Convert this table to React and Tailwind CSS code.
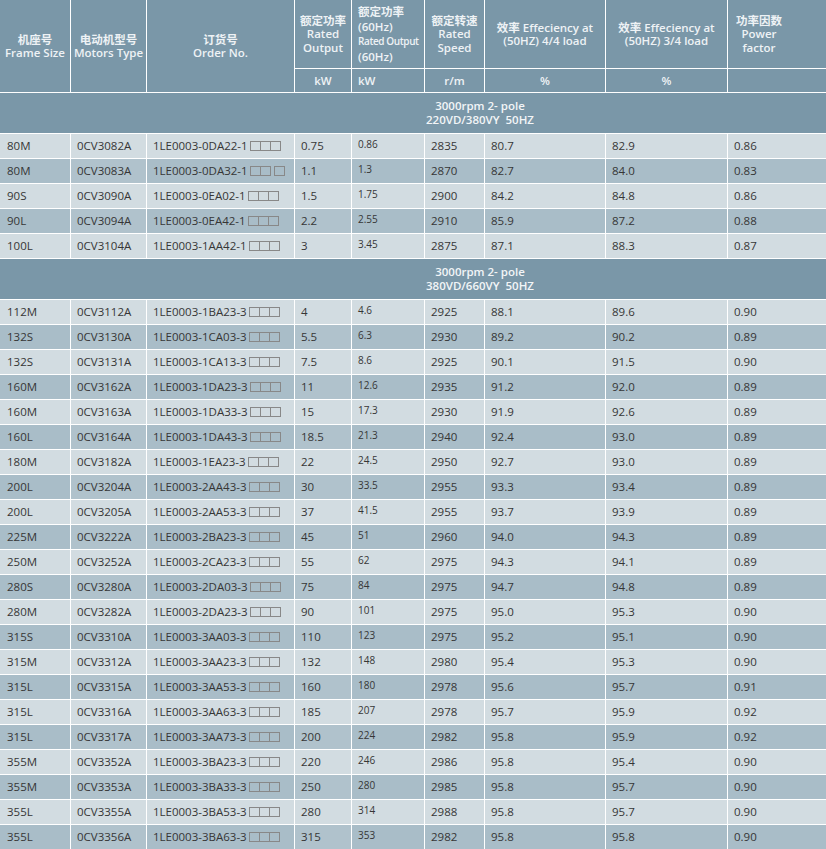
import React from "react";

const group1 = [
  ["80M", "0CV3082A", "1LE0003-0DA22-1", "0.75", "0.86", "2835", "80.7", "82.9", "0.86"],
  ["80M", "0CV3083A", "1LE0003-0DA32-1", "1.1", "1.3", "2870", "82.7", "84.0", "0.83", true],
  ["90S", "0CV3090A", "1LE0003-0EA02-1", "1.5", "1.75", "2900", "84.2", "84.8", "0.86"],
  ["90L", "0CV3094A", "1LE0003-0EA42-1", "2.2", "2.55", "2910", "85.9", "87.2", "0.88"],
  ["100L", "0CV3104A", "1LE0003-1AA42-1", "3", "3.45", "2875", "87.1", "88.3", "0.87"],
];

const group2 = [
  ["112M", "0CV3112A", "1LE0003-1BA23-3", "4", "4.6", "2925", "88.1", "89.6", "0.90"],
  ["132S", "0CV3130A", "1LE0003-1CA03-3", "5.5", "6.3", "2930", "89.2", "90.2", "0.89"],
  ["132S", "0CV3131A", "1LE0003-1CA13-3", "7.5", "8.6", "2925", "90.1", "91.5", "0.90"],
  ["160M", "0CV3162A", "1LE0003-1DA23-3", "11", "12.6", "2935", "91.2", "92.0", "0.89"],
  ["160M", "0CV3163A", "1LE0003-1DA33-3", "15", "17.3", "2930", "91.9", "92.6", "0.89"],
  ["160L", "0CV3164A", "1LE0003-1DA43-3", "18.5", "21.3", "2940", "92.4", "93.0", "0.89"],
  ["180M", "0CV3182A", "1LE0003-1EA23-3", "22", "24.5", "2950", "92.7", "93.0", "0.89"],
  ["200L", "0CV3204A", "1LE0003-2AA43-3", "30", "33.5", "2955", "93.3", "93.4", "0.89"],
  ["200L", "0CV3205A", "1LE0003-2AA53-3", "37", "41.5", "2955", "93.7", "93.9", "0.89"],
  ["225M", "0CV3222A", "1LE0003-2BA23-3", "45", "51", "2960", "94.0", "94.3", "0.89"],
  ["250M", "0CV3252A", "1LE0003-2CA23-3", "55", "62", "2975", "94.3", "94.1", "0.89"],
  ["280S", "0CV3280A", "1LE0003-2DA03-3", "75", "84", "2975", "94.7", "94.8", "0.89"],
  ["280M", "0CV3282A", "1LE0003-2DA23-3", "90", "101", "2975", "95.0", "95.3", "0.90"],
  ["315S", "0CV3310A", "1LE0003-3AA03-3", "110", "123", "2975", "95.2", "95.1", "0.90"],
  ["315M", "0CV3312A", "1LE0003-3AA23-3", "132", "148", "2980", "95.4", "95.3", "0.90"],
  ["315L", "0CV3315A", "1LE0003-3AA53-3", "160", "180", "2978", "95.6", "95.7", "0.91"],
  ["315L", "0CV3316A", "1LE0003-3AA63-3", "185", "207", "2978", "95.7", "95.9", "0.92"],
  ["315L", "0CV3317A", "1LE0003-3AA73-3", "200", "224", "2982", "95.8", "95.9", "0.92"],
  ["355M", "0CV3352A", "1LE0003-3BA23-3", "220", "246", "2986", "95.8", "95.4", "0.90"],
  ["355M", "0CV3353A", "1LE0003-3BA33-3", "250", "280", "2985", "95.8", "95.7", "0.90"],
  ["355L", "0CV3355A", "1LE0003-3BA53-3", "280", "314", "2988", "95.8", "95.7", "0.90"],
  ["355L", "0CV3356A", "1LE0003-3BA63-3", "315", "353", "2982", "95.8", "95.8", "0.90"],
];

const Boxes = ({ split }) => (
  <span className="inline-flex items-center ml-[2px]">
    <span className="w-[11px] h-[10px] border border-[#888]"></span>
    <span className="w-[11px] h-[10px] border border-[#888] -ml-px"></span>
    <span
      className={
        split
          ? "w-[11px] h-[10px] border border-[#888] ml-[3px]"
          : "w-[11px] h-[10px] border border-[#888] -ml-px"
      }
    ></span>
  </span>
);

const Row = ({ r, dark }) => {
  let bg = dark ? "bg-[#a9bdc8]" : "bg-[#d2dce1]";
  let bgAlt = dark ? "bg-[#b0c2cc]" : "bg-[#d2dce1]";
  let cell = "h-[24px] flex items-center pl-[6px] text-[11.5px] text-[#363636] whitespace-nowrap";
  return (
    <>
      <div className={`${cell} ${bg} pl-[7px]`}>{r[0]}</div>
      <div className={`${cell} ${bgAlt}`}>{r[1]}</div>
      <div className={`${cell} ${bg}`}>
        {r[2]}
        <Boxes split={r[9]} />
      </div>
      <div className={`${cell} ${bgAlt}`}>{r[3]}</div>
      <div className={`h-[24px] flex items-start pt-[3px] pl-[6px] text-[10px] text-[#363636] ${bg}`}>{r[4]}</div>
      <div className={`${cell} ${bg} pl-[5px]`}>{r[5]}</div>
      <div className={`${cell} ${bg} pl-[4px]`}>{r[6]}</div>
      <div className={`${cell} ${bg} pl-[5px]`}>{r[7]}</div>
      <div className={`${cell} ${bg} pl-[5px]`}>{r[8]}</div>
    </>
  );
};

const GroupHeader = ({ volts }) => (
  <div className="col-span-full h-[40px] bg-[#7a97a8] flex flex-col justify-center items-center pl-[134px] text-[11.5px] leading-[14px] font-semibold text-[#f2f5f7]">
    <span>3000rpm 2- pole</span>
    <span className="whitespace-pre">{volts}</span>
  </div>
);

const App = () => {
  let head = "bg-[#7a97a8] text-[#eef2f5] text-[11.5px] font-semibold";
  return (
    <div className="w-full min-h-screen bg-white font-['Open_Sans','Noto_Sans_CJK_SC',sans-serif]">
      <div className="grid grid-cols-[70px_75px_147px_56px_72px_59px_120px_121px_1fr] gap-px bg-white">
        <div className={`${head} row-span-2 flex flex-col justify-center items-center leading-[13.5px]`}>
          <span>机座号</span>
          <span className="whitespace-nowrap">Frame Size</span>
        </div>
        <div className={`${head} row-span-2 flex flex-col justify-center items-center leading-[13.5px]`}>
          <span>电动机型号</span>
          <span className="whitespace-nowrap">Motors Type</span>
        </div>
        <div className={`${head} row-span-2 flex flex-col justify-center items-center leading-[13.5px]`}>
          <span>订货号</span>
          <span>Order No.</span>
        </div>
        <div className={`${head} h-[68px] flex flex-col justify-center items-center leading-[13.5px]`}>
          <span>额定功率</span>
          <span>Rated</span>
          <span>Output</span>
        </div>
        <div className={`${head} h-[68px] flex flex-col pt-[4px] pl-[6px] leading-[15px]`}>
          <span>额定功率</span>
          <span>(60Hz)</span>
          <span className="text-[10px] tracking-[-0.4px] whitespace-nowrap">Rated Output</span>
          <span>(60Hz)</span>
        </div>
        <div className={`${head} h-[68px] flex flex-col justify-center items-center leading-[13.5px]`}>
          <span>额定转速</span>
          <span>Rated</span>
          <span>Speed</span>
        </div>
        <div className={`${head} h-[68px] flex flex-col justify-center items-center leading-[13.5px]`}>
          <span>效率 Effeciency at</span>
          <span>(50HZ) 4/4 load</span>
        </div>
        <div className={`${head} h-[68px] flex flex-col justify-center items-center leading-[13.5px]`}>
          <span>效率 Effeciency at</span>
          <span>(50HZ) 3/4 load</span>
        </div>
        <div className={`${head} h-[68px] flex items-center pl-[8px]`}>
          <div className="flex flex-col items-center leading-[13.5px]">
            <span>功率因数</span>
            <span>Power</span>
            <span>factor</span>
          </div>
        </div>

        <div className={`${head} h-[23px] flex items-center justify-center`}>kW</div>
        <div className={`${head} h-[23px] flex items-center pl-[6px]`}>kW</div>
        <div className={`${head} h-[23px] flex items-center justify-center`}>r/m</div>
        <div className={`${head} h-[23px] flex items-center justify-center`}>%</div>
        <div className={`${head} h-[23px] flex items-center justify-center`}>%</div>
        <div className={`${head} h-[23px]`}></div>

        <GroupHeader volts="220VD/380VY  50HZ" />
        {group1.map((r, i) => (
          <Row key={"a" + i} r={r} dark={i % 2 === 1} />
        ))}

        <GroupHeader volts="380VD/660VY  50HZ" />
        {group2.map((r, i) => (
          <Row key={"b" + i} r={r} dark={i % 2 === 1} />
        ))}
      </div>
    </div>
  );
};

export default App;
